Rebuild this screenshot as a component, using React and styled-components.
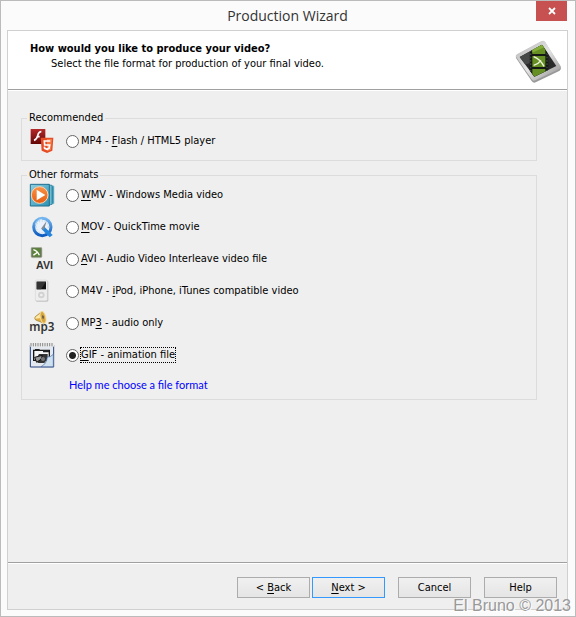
import React, { useState } from "react";
import styled, { createGlobalStyle } from "styled-components";

const GlobalStyle = createGlobalStyle`
  * {
    box-sizing: border-box;
  }

  body {
    margin: 0;
    color: #000;
    font-family: "DejaVu Sans Condensed", "DejaVu Sans", sans-serif;
    font-size: 11px;
    line-height: 14px;
  }
`;

function CamtasiaIcon() {
  return (
    <svg width="48" height="44" viewBox="0 0 144 132" aria-hidden="true">
      <defs>
        <linearGradient id="frame" x1="0" y1="0" x2="1" y2="1">
          <stop offset="0" stopColor="#b4b4b4" />
          <stop offset="0.5" stopColor="#e4e4e4" />
          <stop offset="1" stopColor="#8e8e8e" />
        </linearGradient>
        <clipPath id="glass">
          <path d="M14 51 L81 14 L124 78 L58 110 Z" />
        </clipPath>
      </defs>
      <path d="M3 54 Q0 48 7 44 L78 5 Q86 1 91 8 L137 80 Q140 88 134 92 L62 127 Q55 130 50 123 Z" fill="#999" />
      <path d="M3 50 Q0 46 7 42 L78 4 Q86 0 91 7 L136 77 Q139 83 133 87 L61 121 Q54 124 50 118 Z" fill="url(#frame)" />
      <path d="M14 51 L81 14 L124 78 L58 110 Z" fill="#292b2a" />
      <g clipPath="url(#glass)">
        <path d="M44 0 H100 V130 H44 Z" fill="#151915" />
        <path d="M52 0 H91 V42 H52 Z M52 48 H91 V81 H52 Z M52 87 H91 V130 H52 Z" fill="#658f22" />
        <path d="M52 0 H91 V20 L52 38 Z" fill="#84ad38" />
        <path
          d="M47 30 V125 M96 20 V110"
          stroke="#3c463c"
          strokeWidth="4"
          strokeDasharray="5 5"
        />
        <path d="M12 50 L44 32 V70 L28 74 Z" fill="#464848" />
      </g>
      <path d="M56 50 Q75 57 87 79 M78 61 Q70 72 56 76" fill="none" stroke="#edf5dd" strokeWidth="4" />
    </svg>
  );
}

function FlashIcon() {
  return (
    <svg width="24" height="26" viewBox="0 0 72 78" aria-hidden="true">
      <defs>
        <linearGradient id="flash" x1="0" y1="0" x2="0" y2="1">
          <stop offset="0" stopColor="#b52a2a" />
          <stop offset="1" stopColor="#630606" />
        </linearGradient>
      </defs>
      <path d="M2 3 H46 V48 H2 Z" fill="url(#flash)" />
      <path d="M34 11 Q26 11 23 23 Q20 35 12 37 M20 26 H29" fill="none" stroke="#fff" strokeWidth="5" />
      <path d="M32 29 H70 L67 68 L51 75 L35 68 Z" fill="#e44d26" />
      <path d="M51 33 H66 L63 65 L51 70 Z" fill="#f47b45" />
      <path d="M61 39 H43 L44 51 H59 L57 61 L51 64 L44 61 L43 56" fill="none" stroke="#fff" strokeWidth="5" />
    </svg>
  );
}

function WmvIcon() {
  return (
    <svg width="26" height="24" viewBox="0 0 78 72" aria-hidden="true">
      <defs>
        <linearGradient id="wmv" x1="0" y1="0" x2="1" y2="1">
          <stop offset="0" stopColor="#8fd0e0" />
          <stop offset="1" stopColor="#2b91b4" />
        </linearGradient>
        <linearGradient id="play" x1="0" y1="0" x2="0" y2="1">
          <stop offset="0" stopColor="#f99348" />
          <stop offset="1" stopColor="#e85c10" />
        </linearGradient>
      </defs>
      <path d="M60 7 L75 9 V62 L60 65 Z" fill="#3a95b5" stroke="#8fcbdc" strokeWidth="2" />
      <path d="M56 5 L69 7 V64 L56 67 Z" fill="#6fbcd0" stroke="#27718d" strokeWidth="2" />
      <path d="M4 4 H61 V69 H4 Z" fill="url(#wmv)" stroke="#206f90" strokeWidth="3" />
      <circle cx="32" cy="36" r="25" fill="url(#play)" stroke="#ffd3ae" strokeWidth="3" />
      <path d="M23 20 L49 36 L23 52 Z" fill="#fff" />
    </svg>
  );
}

function QuickTimeIcon() {
  return (
    <svg width="24" height="24" viewBox="0 0 72 72" aria-hidden="true">
      <defs>
        <linearGradient id="quick" x1="0" y1="0" x2="0" y2="1">
          <stop offset="0" stopColor="#75b6ee" />
          <stop offset="1" stopColor="#0e5cc0" />
        </linearGradient>
      </defs>
      <circle cx="37" cy="36" r="26" fill="#e9f2fa" stroke="url(#quick)" strokeWidth="9" />
      <circle cx="37" cy="36" r="18" fill="none" stroke="#a9b8c5" strokeWidth="2" strokeDasharray="3 6" />
      <path d="M43 35 L68 60 L59 67 L35 43 Z" fill="#2585dc" />
      <path d="M33 41 L50 18 L42 44 Z" fill="#808b98" />
      <path d="M16 29 Q20 14 36 13" fill="none" stroke="#c3e1fa" strokeWidth="3" />
    </svg>
  );
}

function AviIcon() {
  return (
    <svg width="26" height="24" viewBox="0 0 78 72" aria-hidden="true">
      <rect x="6" y="1" width="33" height="31" rx="4" fill="#6b775b" stroke="#bbc2b2" strokeWidth="2" />
      <path d="M11 4 H34 V28 H11 Z" fill="#5b8439" />
      <path d="M13 8 Q25 11 31 25 M26 14 Q22 21 13 24" fill="none" stroke="#fff" strokeWidth="4" />
      <text x="21" y="65" fontFamily="Liberation Sans, sans-serif" fontSize="32" fontWeight="700" fill="#333">
        AVI
      </text>
    </svg>
  );
}

function IpodIcon() {
  return (
    <svg width="24" height="24" viewBox="0 0 72 72" aria-hidden="true">
      <rect x="17" y="5" width="38" height="63" rx="4" fill="#c4c4c4" />
      <rect x="16" y="3" width="36" height="62" rx="4" fill="#eee" stroke="#ccc" />
      <rect x="20" y="8" width="28" height="23" fill="#111" />
      <path d="M20 8 H48 L33 31 H20 Z" fill="#333" />
      <circle cx="34" cy="48" r="10" fill="#d2d2d2" />
      <circle cx="34" cy="48" r="4" fill="#f1f1f1" />
    </svg>
  );
}

function Mp3Icon() {
  return (
    <svg width="26" height="26" viewBox="0 0 78 78" aria-hidden="true">
      <path d="M18 21 L39 4 Q54 20 45 40 L20 30 Q16 26 18 21 Z" fill="#e0ad43" stroke="#967831" strokeWidth="2" />
      <path d="M20 21 L36 9 V24 L19 26 Z" fill="#ffe9aa" />
      <ellipse cx="42" cy="22" rx="8" ry="18" fill="#d8a640" stroke="#f3da96" strokeWidth="3" transform="rotate(-14 42 22)" />
      <path d="M40 15 Q49 18 43 28 Q37 24 40 15 Z" fill="#6f6246" />
      <text x="1" y="64" fontFamily="Noto Sans, sans-serif" fontSize="35" fontWeight="600" fill="#333">
        mp3
      </text>
    </svg>
  );
}

function GifIcon() {
  return (
    <svg width="26" height="26" viewBox="0 0 78 78" aria-hidden="true">
      <path d="M4 9 H74 V75 H4 Z" fill="#e4e9ef" stroke="#24417e" strokeWidth="3" />
      <path d="M3 3 H75 V14 H3 Z" fill="#ececec" />
      <path d="M6 3 V13 M13 3 V13 M20 3 V13 M27 3 V13 M34 3 V13 M41 3 V13 M48 3 V13 M55 3 V13 M62 3 V13 M69 3 V13" stroke="#888" strokeWidth="3" />
      <path d="M14 25 H61 V55 H14 Z" fill="#f5f5f5" stroke="#151515" strokeWidth="4" />
      <path d="M18 21 H32 V26 H18 Z M42 24 H60 V31 H42 Z" fill="#222" />
      <path d="M30 36 H56 V50 L46 63 H28 L20 54 Z" fill="#333" />
      <path d="M17 46 L40 40 L36 52 L23 61 Z" fill="#999" stroke="#111" strokeWidth="3" />
      <circle cx="42" cy="51" r="6" fill="#777" />
      <path d="M73 37 V74 H36 Q53 66 55 45 Q63 47 73 37 Z" fill="#cfe0ef" stroke="#45679d" strokeWidth="2" />
    </svg>
  );
}

const otherFormats = [
  { id: "wmv", Icon: WmvIcon, before: "", hotkey: "W", after: "MV - Windows Media video" },
  { id: "mov", Icon: QuickTimeIcon, before: "", hotkey: "M", after: "OV - QuickTime movie" },
  { id: "avi", Icon: AviIcon, before: "", hotkey: "A", after: "VI - Audio Video Interleave video file" },
  { id: "m4v", Icon: IpodIcon, before: "M4V - ", hotkey: "i", after: "Pod, iPhone, iTunes compatible video" },
  { id: "mp3", Icon: Mp3Icon, before: "MP", hotkey: "3", after: " - audio only" },
  { id: "gif", Icon: GifIcon, before: "", hotkey: "G", after: "IF - animation file" },
];

function Format({ id, Icon, before, hotkey, after, selected, onSelect }) {
  return (
    <FormatRow>
      <IconCell>
        <Icon />
      </IconCell>
      <Radio
        type="radio"
        name="format"
        id={id}
        checked={selected === id}
        onChange={() => onSelect(id)}
      />
      <FormatLabel htmlFor={id} $active={selected === id}>
        {before}
        <Hotkey>{hotkey}</Hotkey>
        {after}
      </FormatLabel>
    </FormatRow>
  );
}

function App() {
  const [selected, setSelected] = useState("gif");

  return (
    <Window>
      <GlobalStyle />
      <TitleBar>
        <Title>Production Wizard</Title>
        <CloseButton aria-label="Close">
          <svg width="8" height="8" viewBox="0 0 8 8" aria-hidden="true">
            <path d="M1 1 L7 7 M7 1 L1 7" stroke="#fff" strokeWidth="1.8" />
          </svg>
        </CloseButton>
      </TitleBar>
      <Dialog>
        <Header>
          <div>
            <Question>How would you like to produce your video?</Question>
            <Hint>Select the file format for production of your final video.</Hint>
          </div>
          <CamtasiaIcon />
        </Header>
        <Content>
          <Group $padding="3px 7px 5px">
            <Legend>Recommended</Legend>
            <Format
              id="mp4"
              Icon={FlashIcon}
              before="MP4 - "
              hotkey="F"
              after="lash / HTML5 player"
              selected={selected}
              onSelect={setSelected}
            />
          </Group>
          <Group $padding="0 7px 7px">
            <Legend>Other formats</Legend>
            <FormatList>
              {otherFormats.map((format) => (
                <Format key={format.id} {...format} selected={selected} onSelect={setSelected} />
              ))}
            </FormatList>
            <HelpLink href="#help">Help me choose a file format</HelpLink>
          </Group>
        </Content>
        <Footer>
          <ButtonPair>
            <Button>
              &lt; <Hotkey>B</Hotkey>ack
            </Button>
            <Button $primary>
              <Hotkey>N</Hotkey>ext &gt;
            </Button>
          </ButtonPair>
          <Button>Cancel</Button>
          <Button>Help</Button>
        </Footer>
      </Dialog>
      <Watermark>El Bruno © 2013</Watermark>
    </Window>
  );
}

export default App;

const Window = styled.div`
  position: relative;
  display: flex;
  flex-direction: column;
  min-height: 100vh;
  padding: 0 7px 6px 6px;
  border: 1px solid #bbb;
  background: #fbfbfb;
`;

const TitleBar = styled.header`
  display: grid;
  grid-template-columns: 32px 1fr 32px;
  align-items: start;
  height: 29px;
`;

const Title = styled.h1`
  grid-column: 2;
  margin: 0;
  color: #333;
  font-family: "Open Sans", sans-serif;
  font-size: 14px;
  font-weight: 400;
  line-height: 30px;
  text-align: center;
`;

const CloseButton = styled.button`
  display: flex;
  align-items: center;
  justify-content: center;
  width: 31px;
  height: 20px;
  padding: 0;
  border: 0;
  background: #c75050;
`;

const Dialog = styled.main`
  display: flex;
  flex: 1;
  flex-direction: column;
  border: 1px solid #d0d0d0;
  background: #efefef;
`;

const Header = styled.section`
  display: flex;
  justify-content: space-between;
  height: 59px;
  padding: 9px 4px 0 22px;
  border-bottom: 1px solid #a0a0a0;
  background: #fff;
  box-shadow: 0 1px #fff;
`;

const Question = styled.h2`
  margin: 1px 0;
  font-size: 11px;
  line-height: 15px;
`;

const Hint = styled.p`
  margin: 0;
  padding-left: 21px;
`;

const Content = styled.form`
  display: flex;
  flex: 1;
  flex-direction: column;
  gap: 8px;
  padding: 22px 30px 0 13px;
`;

const Group = styled.fieldset`
  min-width: 0;
  margin: 0;
  padding: ${(props) => props.$padding};
  border: 1px solid #dcdcdc;
`;

const Legend = styled.legend`
  margin-left: -2px;
  padding: 0 2px;
  line-height: 12px;
`;

const FormatList = styled.div`
  display: flex;
  flex-direction: column;
  gap: 4px;
`;

const FormatRow = styled.div`
  display: flex;
  align-items: center;
  height: 28px;
`;

const IconCell = styled.span`
  display: flex;
  justify-content: center;
  width: 26px;
  margin-right: 11px;
`;

const Radio = styled.input`
  appearance: none;
  width: 13px;
  height: 13px;
  margin: 0;
  border: 1px solid #666;
  border-radius: 50%;
  background: #fff;

  &:checked {
    background: radial-gradient(circle, #222 3px, #fff 4px);
  }
`;

const FormatLabel = styled.label`
  margin-left: 2px;
  outline: ${(props) => (props.$active ? "1px dotted #000" : "none")};
`;

const Hotkey = styled.span`
  text-decoration: underline;
  text-underline-offset: 2px;
`;

const HelpLink = styled.a`
  display: block;
  width: max-content;
  margin: 9px 0 0 40px;
  color: #00f;
  font-family: Lato, Arial, sans-serif;
  text-decoration: none;
`;

const Footer = styled.footer`
  display: flex;
  justify-content: flex-end;
  gap: 13px;
  height: 47px;
  padding: 14px 10px 0;
  border-top: 1px solid #a0a0a0;
  box-shadow: inset 0 1px #fff;
`;

const ButtonPair = styled.div`
  display: flex;
  gap: 2px;
`;

const Button = styled.button`
  width: 73px;
  height: 21px;
  padding: 0;
  border: 1px solid ${(props) => (props.$primary ? "#3399ff" : "#acacac")};
  background: linear-gradient(#f0f0f0, #e5e5e5);
  color: #000;
  font: inherit;
`;

const Watermark = styled.div`
  position: absolute;
  right: 4px;
  bottom: 0;
  color: #999;
  font-family: "Liberation Sans", Arial, sans-serif;
  font-size: 16px;
  line-height: 20px;
  text-shadow: 1px 1px #fff;
  pointer-events: none;
`;
